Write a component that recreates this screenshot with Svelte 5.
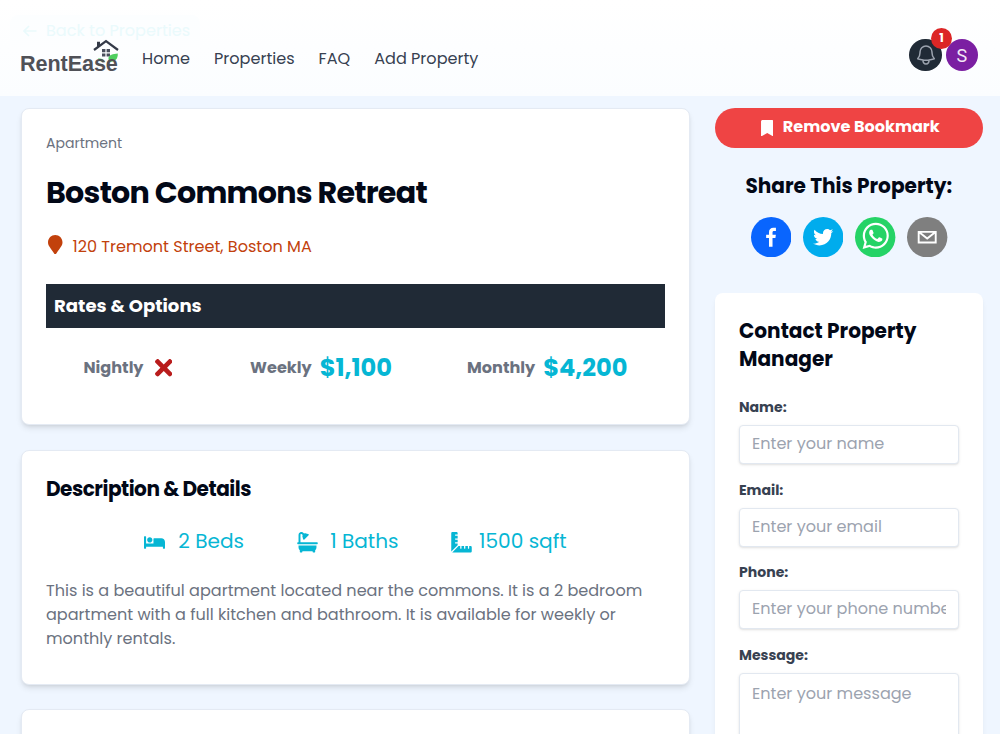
<script>
  const links = ['Home', 'Properties', 'FAQ', 'Add Property'];

  const features = [
    {
      label: '2 Beds', gap: 13, box: '0 0 640 512', h: 17,
      d: 'M176 256c44.11 0 80-35.89 80-80s-35.89-80-80-80-80 35.89-80 80 35.89 80 80 80zm352-128H304c-8.84 0-16 7.16-16 16v144H64V80c0-8.84-7.16-16-16-16H16C7.16 64 0 71.16 0 80v352c0 8.84 7.16 16 16 16h32c8.84 0 16-7.16 16-16v-48h512v48c0 8.84 7.16 16 16 16h32c8.84 0 16-7.16 16-16V240c0-61.86-50.14-112-112-112z',
    },
    {
      label: '1 Baths', gap: 12, box: '0 0 512 512', h: 20.5,
      d: 'M32,384a95.4,95.4,0,0,0,32,71.09V496a16,16,0,0,0,16,16h32a16,16,0,0,0,16-16V480H384v16a16,16,0,0,0,16,16h32a16,16,0,0,0,16-16V455.09A95.4,95.4,0,0,0,480,384V336H32ZM496,256H80V69.25a21.26,21.26,0,0,1,36.28-15l19.27,19.26c-13.13,29.88-7.61,59.11,8.62,79.73l-.17.17A16,16,0,0,0,144,176l11.31,11.31a16,16,0,0,0,22.63,0L283.31,81.94a16,16,0,0,0,0-22.63L272,48a16,16,0,0,0-22.62,0l-.17.17c-20.62-16.23-49.83-21.75-79.73-8.62L150.22,20.28A69.25,69.25,0,0,0,32,69.25V256H16A16,16,0,0,0,0,272v16a16,16,0,0,0,16,16H496a16,16,0,0,0,16-16V272A16,16,0,0,0,496,256Z',
    },
    {
      label: '1500 sqft', gap: 6.5, box: '0 0 512 512', h: 20.5,
      d: 'M160 288h-56c-4.42 0-8-3.58-8-8v-16c0-4.42 3.58-8 8-8h56v-64h-56c-4.42 0-8-3.58-8-8v-16c0-4.42 3.58-8 8-8h56V96h-56c-4.42 0-8-3.58-8-8V72c0-4.42 3.58-8 8-8h56V32c0-17.67-14.33-32-32-32H32C14.33 0 0 14.33 0 32v448c0 2.77.91 5.24 1.57 7.8L160 329.38V288zm320 64h-32v56c0 4.42-3.58 8-8 8h-16c-4.42 0-8-3.58-8-8v-56h-64v56c0 4.42-3.58 8-8 8h-16c-4.42 0-8-3.58-8-8v-56h-64v56c0 4.42-3.58 8-8 8h-16c-4.42 0-8-3.58-8-8v-56h-41.37L24.2 510.43c2.56.66 5.04 1.57 7.8 1.57h448c17.67 0 32-14.33 32-32v-96c0-17.67-14.33-32-32-32z',
    },
  ];

  const shares = [
    {
      name: 'facebook', bg: '#0965fe',
      d: 'M34.1,47V33.3h4.6l0.7-5.3h-5.3v-3.4c0-1.5,0.4-2.6,2.6-2.6l2.8,0v-4.8c-0.5-0.1-2.2-0.2-4.1-0.2c-4.1,0-6.9,2.5-6.9,7V28H24v5.3h4.5V47H34.1z',
    },
    {
      name: 'twitter', bg: '#00aced',
      d: 'M48,22.1c-1.2,0.5-2.4,0.9-3.8,1c1.4-0.8,2.4-2.1,2.9-3.6c-1.3,0.8-2.7,1.3-4.2,1.6C41.7,19.8,40,19,38.2,19c-3.6,0-6.6,2.9-6.6,6.6c0,0.5,0.1,1,0.2,1.5c-5.5-0.3-10.3-2.9-13.5-6.9c-0.6,1-0.9,2.1-0.9,3.3c0,2.3,1.2,4.3,2.9,5.5c-1.1,0-2.1-0.3-3-0.8c0,0,0,0.1,0,0.1c0,3.2,2.3,5.8,5.3,6.4c-0.6,0.1-1.1,0.2-1.7,0.2c-0.4,0-0.8,0-1.2-0.1c0.8,2.6,3.3,4.5,6.1,4.6c-2.2,1.8-5.1,2.8-8.2,2.8c-0.5,0-1.1,0-1.6-0.1c2.9,1.9,6.4,2.9,10.1,2.9c12.1,0,18.7-10,18.7-18.7c0-0.3,0-0.6,0-0.8C46,24.5,47.1,23.4,48,22.1z',
    },
    {
      name: 'whatsapp', bg: '#25d366',
      d: 'm42.32286,33.93287c-0.5178,-0.2589 -3.04726,-1.49644 -3.52105,-1.66732c-0.4712,-0.17346 -0.81554,-0.2589 -1.15987,0.2589c-0.34175,0.51004 -1.33075,1.66474 -1.63108,2.00648c-0.30032,0.33658 -0.60064,0.36247 -1.11327,0.12945c-0.5178,-0.2589 -2.17994,-0.80259 -4.14759,-2.56312c-1.53269,-1.37217 -2.56312,-3.05503 -2.86603,-3.57283c-0.30033,-0.5178 -0.03366,-0.80259 0.22524,-1.06149c0.23301,-0.23301 0.5178,-0.59547 0.7767,-0.90616c0.25372,-0.31068 0.33657,-0.5178 0.51262,-0.85437c0.17088,-0.36246 0.08544,-0.64725 -0.04402,-0.90615c-0.12945,-0.2589 -1.15987,-2.79613 -1.58964,-3.80584c-0.41424,-1.00971 -0.84142,-0.88027 -1.15987,-0.88027c-0.29773,-0.02588 -0.64208,-0.02588 -0.98382,-0.02588c-0.34693,0 -0.90616,0.12945 -1.37736,0.62136c-0.4712,0.5178 -1.80194,1.76053 -1.80194,4.27186c0,2.51134 1.84596,4.945 2.10227,5.30747c0.2589,0.33657 3.63497,5.51458 8.80262,7.74113c1.23237,0.5178 2.1903,0.82848 2.94111,1.08738c1.23237,0.38836 2.35599,0.33657 3.24402,0.20712c0.99159,-0.15534 3.04985,-1.24272 3.47963,-2.45956c0.44013,-1.21683 0.44013,-2.22654 0.31068,-2.45955c-0.12945,-0.23301 -0.46601,-0.36247 -0.98382,-0.59548m-9.40068,12.84407l-0.02589,0c-3.05503,0 -6.08417,-0.82849 -8.72495,-2.38189l-0.62136,-0.37023l-6.47252,1.68286l1.73463,-6.29129l-0.41424,-0.64725c-1.70875,-2.71846 -2.6149,-5.85116 -2.6149,-9.07706c0,-9.39809 7.68934,-17.06155 17.15993,-17.06155c4.58253,0 8.88029,1.78642 12.11655,5.02268c3.23625,3.21036 5.02267,7.50812 5.02267,12.06476c-0.0078,9.3981 -7.69712,17.06155 -17.14699,17.06155m14.58906,-31.58846c-3.93529,-3.80584 -9.1133,-5.95471 -14.62789,-5.95471c-11.36055,0 -20.60848,9.2065 -20.61625,20.52564c0,3.61684 0.94757,7.14565 2.75211,10.26282l-2.92557,10.63564l10.93337,-2.85309c3.0136,1.63108 6.4052,2.4958 9.85634,2.49839l0.01035,0c11.36574,0 20.61884,-9.2091 20.62403,-20.53082c0,-5.48093 -2.14111,-10.64081 -6.03239,-14.51915',
    },
    {
      name: 'email', bg: '#7f7f7f',
      d: 'M17,22v20h30V22H17z M41.1,25L32,32.1L22.9,25H41.1z M20,39V26.6l12,9.3l12-9.3V39H20z',
    },
  ];

  const fields = [
    { id: 'name', label: 'Name:', hint: 'Enter your name' },
    { id: 'email', label: 'Email:', hint: 'Enter your email' },
    { id: 'phone', label: 'Phone:', hint: 'Enter your phone number' },
  ];
</script>

<div class="page">
  <header>
    <div class="back">
      <svg width="14" height="12" viewBox="0 0 14 12" fill="none" stroke="currentColor" stroke-width="1.6"><path d="M13.5 6H1M6 1 1 6l5 5" /></svg>
      <span>Back to Properties</span>
    </div>
    <nav>
      <div class="logo">
        <span>RentEase</span>
        <svg width="26" height="25" viewBox="0 0 26 25">
          <path d="M1 11 13 2l12 9" fill="none" stroke="#343a48" stroke-width="2.2" />
          <path d="M4 2.8h3v3.4L4 8.4z" fill="#343a48" />
          <path d="M9 10h3.4v3.2H9zM13.6 10H17v3.2h-3.4zM9 14.4h3.4v3H9zM13.6 14.4H17v3h-3.4z" fill="#4a4f5c" />
          <path d="M24.8 14.6c-5 .2-8.600 1.700-9.400 4.400l.6 3.500c5 1 9-1.500 8.800-7.900z" fill="#4fcf5e" />
          <path d="M5 19.300c3 0 5.900.9 7.100 3.700-3.300.4-6.100-1-7.100-3.700z" fill="#5fd36b" />
        </svg>
      </div>
      {#each links as l}
        <a href="#top">{l}</a>
      {/each}
    </nav>
    <div class="user">
      <button class="bell" aria-label="Notifications">
        <svg width="24" height="24" viewBox="0 0 24 24" fill="none" stroke="#9ca3af" stroke-width="1.5" stroke-linecap="round" stroke-linejoin="round"><path d="M14.857 17.082a23.848 23.848 0 005.454-1.31A8.967 8.967 0 0118 9.75v-.7V9A6 6 0 006 9v.75a8.967 8.967 0 01-2.312 6.022c1.733.64 3.56 1.085 5.455 1.31m5.714 0a24.255 24.255 0 01-5.714 0m5.714 0a3 3 0 11-5.714 0" /></svg>
        <span class="badge">1</span>
      </button>
      <div class="avatar">S</div>
    </div>
  </header>

  <main>
    <div class="col">
      <section class="card first">
        <div class="type">Apartment</div>
        <h1>Boston Commons Retreat</h1>
        <div class="addr">
          <svg width="14.500" height="19.300" viewBox="0 0 384 512" fill="currentColor"><path d="M172.268 501.67C26.97 291.031 0 269.413 0 192 0 85.961 85.961 0 192 0s192 85.961 192 192c0 77.413-26.97 99.031-172.268 309.67-9.535 13.774-29.93 13.773-39.464 0z" /></svg>
          <span>120 Tremont Street, Boston MA</span>
        </div>
        <h3 class="bar">Rates &amp; Options</h3>
        <div class="rates">
          <div class="rate">
            <span>Nightly</span>
            <svg class="none" width="17.500" height="25.500" viewBox="0 0 352 512" fill="#b91c1c"><path d="M242.72 256l100.07-100.07c12.28-12.28 12.28-32.19 0-44.48l-22.24-22.24c-12.28-12.28-32.19-12.28-44.48 0L176 189.28 75.93 89.21c-12.28-12.28-32.19-12.28-44.48 0L9.21 111.45c-12.28 12.28-12.28 32.19 0 44.48L109.28 256 9.21 356.07c-12.28 12.28-12.28 32.19 0 44.48l22.24 22.24c12.28 12.28 32.2 12.28 44.48 0L176 322.72l100.07 100.07c12.28 12.28 32.2 12.28 44.48 0l22.24-22.24c12.28-12.28 12.28-32.19 0-44.48L242.72 256z" /></svg>
          </div>
          <div class="rate"><span>Weekly</span><strong>$1,100</strong></div>
          <div class="rate"><span>Monthly</span><strong>$4,200</strong></div>
        </div>
      </section>

      <section class="card second">
        <h3>Description &amp; Details</h3>
        <div class="features">
          {#each features as f}
            <div class="feature" style="gap:{f.gap}px">
              <svg width="21" height={f.h} viewBox={f.box} fill="currentColor"><path d={f.d} /></svg>
              <span>{f.label}</span>
            </div>
          {/each}
        </div>
        <p>
          This is a beautiful apartment located near the commons. It is a 2 bedroom
          apartment with a full kitchen and bathroom. It is available for weekly or
          monthly rentals.
        </p>
      </section>

      <section class="card third"></section>
    </div>

    <aside>
      <button class="bookmark">
        <svg width="12.500" height="16.600" viewBox="0 0 384 512" fill="currentColor"><path d="M0 512V48C0 21.490 21.490 0 48 0h288c26.510 0 48 21.490 48 48v464L192 400 0 512z" /></svg>
        <span>Remove Bookmark</span>
      </button>
      <h3 class="share">Share This Property:</h3>
      <div class="icons">
        {#each shares as s}
          <button aria-label={s.name}>
            <svg width="40.400" height="40.400" viewBox="0 0 64 64"><circle cx="32" cy="32" r="32" fill={s.bg} /><path d={s.d} fill="#fff" /></svg>
          </button>
        {/each}
      </div>
      <form class="contact">
        <h3>Contact Property Manager</h3>
        {#each fields as f}
          <label for={f.id}>{f.label}</label>
          <input id={f.id} type="text" placeholder={f.hint} />
        {/each}
        <label for="message">Message:</label>
        <textarea id="message" placeholder="Enter your message"></textarea>
      </form>
    </aside>
  </main>
</div>

<style>
  :global(body) { background: #fff; }
  * { box-sizing: border-box; }
  .page {
    height: 734px;
    overflow: hidden;
    background: #eff6ff;
    font-family: Poppins, Inter, sans-serif;
    font-size: 16.080px;
    line-height: 24px;
    color: #020817;
  }
  button { border: 0; padding: 0; font: inherit; background: none; }
  h1, h3, p { margin: 0; }
  svg { display: block; flex: none; }

  header {
    position: relative;
    height: 96px;
    padding: 0 22px 0 20px;
    display: flex;
    justify-content: space-between;
    background: linear-gradient(#fff, #fbfdff);
  }
  .back {
    position: absolute;
    left: 10px;
    top: 15px;
    width: 190px;
    height: 38px;
    padding: 10px 0 0 13px;
    border-radius: 8px;
    display: flex;
    gap: 9px;
    line-height: 12px;
    background: linear-gradient(#fcfeff, #fdfeff);
    color: #eafafc;
    white-space: nowrap;
  }
  nav { position: relative; display: flex; gap: 24px; padding-top: 47px; white-space: nowrap; }
  nav a { color: #374151; text-decoration: none; height: 24px; }
  .logo {
    position: relative;
    width: 98px;
    font: bold 21.6px/24px "Liberation Sans", Arial, sans-serif;
    color: #505157;
  }
  .logo span { position: relative; z-index: 1; top: 5px; letter-spacing: -0.08px; }
  .logo svg { position: absolute; left: 72.500px; top: -8.500px; }

  .user { display: flex; gap: 4px; padding-top: 38.500px; }
  .bell {
    position: relative;
    width: 32.300px;
    height: 32.300px;
    border-radius: 50%;
    background: #202a36;
    display: grid;
    place-items: center;
  }
  .badge {
    position: absolute;
    left: 21.500px;
    top: -10.500px;
    width: 21px;
    height: 20.500px;
    border-radius: 10.500px;
    background: #dc2626;
    color: #fff;
    font: 700 12px/20px Poppins, Inter, sans-serif;
    text-align: center;
  }
  .avatar {
    width: 32.300px;
    height: 32.300px;
    border-radius: 50%;
    background: #7b1fa2;
    color: #f3e9f7;
    font: 400 18px/33.500px Roboto, sans-serif;
    text-align: center;
  }

  main {
    display: grid;
    grid-template-columns: 669px 268.500px;
    gap: 24.500px;
    padding: 12px 0 0 21px;
  }
  .col { display: flex; flex-direction: column; gap: 24.500px; }
  .card {
    border: 1px solid #e4eaf3;
    border-radius: 8px;
    background: #fff;
    padding: 24px;
    box-shadow: 0 4px 6px -1px rgb(0 0 0 / 0.1), 0 2px 4px -2px rgb(0 0 0 / 0.1);
  }
  .first { height: 317px; }
  .second { height: 235px; }
  .third { height: 90px; }

  .type { font-size: 14.070px; line-height: 20px; color: #6b7280; }
  h1 { margin-top: 22px; font-size: 30.150px; line-height: 36px; font-weight: 700; letter-spacing: -0.750px; }
  .addr { display: flex; gap: 10px; margin-top: 23px; padding-left: 2px; color: #c2410c; }
  .addr svg { margin-top: 1px; }
  .addr span { margin: 1px 0 -1px; }
  .bar {
    margin-top: 26px;
    height: 44px;
    padding-left: 8px;
    background: #202a36;
    color: #fff;
    font-size: 18.090px;
    line-height: 43px;
    font-weight: 700;
  }
  .rates { display: flex; justify-content: space-around; margin-top: 23.500px; height: 32px; }
  .rate {
    display: flex;
    align-items: center;
    gap: 8px;
    font-weight: 700;
    color: #6b7280;
  }
  .rate strong { font-size: 24.120px; font-weight: 700; color: #06b6d4; }
  .none { margin: 0 3px 0 3px; }

  .second h3 { font-size: 20.100px; line-height: 28px; font-weight: 700; letter-spacing: -0.500px; padding-top: 0.500px; }
  .features { display: flex; justify-content: center; gap: 53px; margin-top: 23.500px; font-size: 20.100px; line-height: 28px; color: #06b6d4; }
  .feature { display: flex; }
  .feature svg { align-self: center; margin-top: 4px; }
  .second p { margin-top: 24.500px; line-height: 24.150px; color: #6b7280; }

  aside { display: flex; flex-direction: column; }
  .bookmark {
    height: 40px;
    border-radius: 20px;
    background: #ef4444;
    color: #fff;
    display: flex;
    align-items: center;
    justify-content: center;
    gap: 9.500px;
    padding-left: 3px;
    font-weight: 700;
    line-height: 38px;
  }
  .bookmark span { margin-top: -2px; }
  .share { margin-top: 24px; text-align: center; font-size: 20.100px; line-height: 28px; font-weight: 700; }
  .icons { display: flex; justify-content: center; gap: 11.900px; margin-top: 16.500px; padding-left: 1px; }
  .contact {
    margin-top: 36px;
    height: 500px;
    padding: 24px;
    border-radius: 8px;
    background: #fff;
    box-shadow: 0 4px 6px -1px rgb(0 0 0 / 0.06), 0 2px 4px -2px rgb(0 0 0 / 0.06);
  }
  .contact h3 { font-size: 20.100px; line-height: 28px; font-weight: 700; margin-bottom: 24.500px; padding-left: 0.500px; }
  label { display: block; padding-left: 0.500px; font-size: 14.070px; line-height: 20px; font-weight: 700; color: #374151; margin-bottom: 8px; }
  input, textarea {
    display: block;
    width: 220.500px;
    height: 39px;
    margin: 0 0 15.500px;
    padding: 7px 12px 9px 12.500px;
    border: 1px solid #e2e8f0;
    border-radius: 4px;
    background: #fff;
    box-shadow: 0 1px 3px rgb(0 0 0 / 0.1), 0 1px 2px -1px rgb(0 0 0 / 0.1);
    font: 16.080px/22px Poppins, Inter, sans-serif;
    outline: none;
    resize: none;
  }
  textarea { height: 180px; padding-top: 9px; }
  input::placeholder, textarea::placeholder { color: #9ca3af; opacity: 1; }
</style>
